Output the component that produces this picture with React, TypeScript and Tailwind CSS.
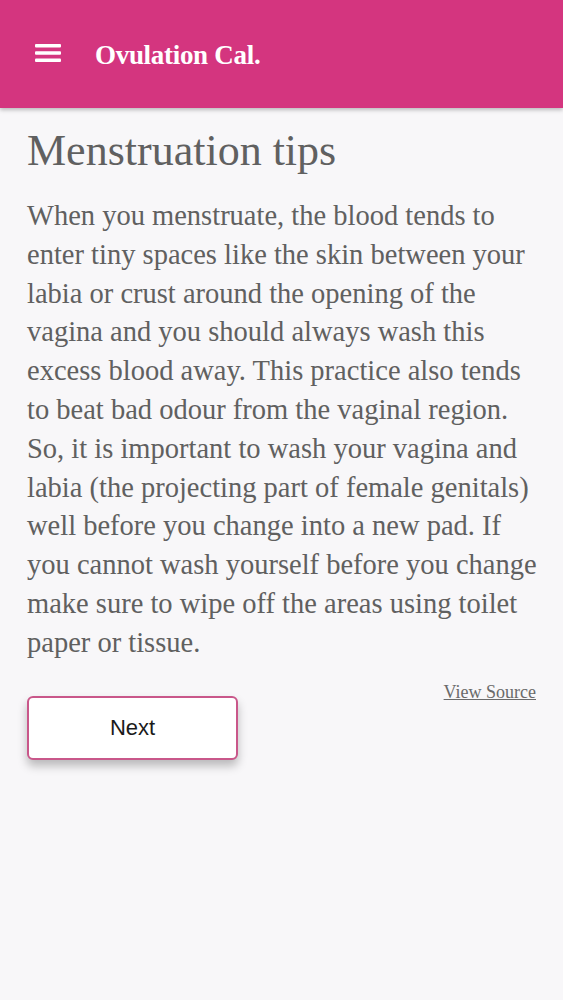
import React from "react";

const lines = [
  "When you menstruate, the blood tends to",
  "enter tiny spaces like the skin between your",
  "labia or crust around the opening of the",
  "vagina and you should always wash this",
  "excess blood away. This practice also tends",
  "to beat bad odour from the vaginal region.",
  "So, it is important to wash your vagina and",
  "labia (the projecting part of female genitals)",
  "well before you change into a new pad. If",
  "you cannot wash yourself before you change",
  "make sure to wipe off the areas using toilet",
  "paper or tissue.",
];

export default function App() {
  return (
    <div className="min-h-[1000px] w-full bg-[#f8f7f9] font-['Liberation_Serif',serif]">
      <header className="h-[108px] bg-[#d4357f] flex items-center pl-[35px] shadow-[0_2px_4px_rgba(0,0,0,0.25)] relative z-10">
        <svg width="26" height="22" viewBox="0 0 26 22" className="mt-[-2px]">
          <rect x="0" y="2" width="26" height="3.4" rx="1" fill="#fff" />
          <rect x="0" y="9.3" width="26" height="3.4" rx="1" fill="#fff" />
          <rect x="0" y="16.6" width="26" height="3.4" rx="1" fill="#fff" />
        </svg>
        <h1 className="ml-[34px] text-white text-[27px] font-bold tracking-[-0.3px] mt-[2px]">Ovulation Cal.</h1>
      </header>
      <main className="px-[27px] pt-[18px]">
        <h2 className="text-[44px] leading-[50px] text-[#606060]">Menstruation tips</h2>
        <p className="mt-[21px] text-[28.5px] leading-[38.8px] text-[#606060]">
          {lines.map((l, i) => (
            <span key={i} className="block whitespace-nowrap">{l}</span>
          ))}
        </p>
        <div className="flex justify-end mt-[18px]">
          <a href="#" className="text-[18px] leading-[22px] text-[#6a6a6a] underline">View Source</a>
        </div>
        <button className="mt-[-7px] w-[211px] h-[64px] bg-white border-2 border-[#c9578a] rounded-[6px] shadow-[0_6px_10px_rgba(0,0,0,0.25)] text-[22px] text-[#1a1a1a] font-['Liberation_Sans',sans-serif]">
          Next
        </button>
      </main>
    </div>
  );
}
